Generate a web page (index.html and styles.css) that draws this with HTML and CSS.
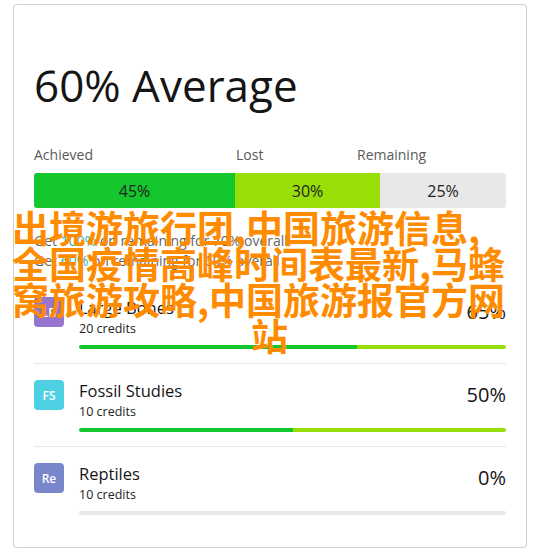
FILE: index.html
```html
<!DOCTYPE html>
<html lang="en">
<head>
<meta charset="utf-8">
<title>Average</title>
<link rel="stylesheet" href="styles.css">
</head>
<body>
<div class="card">
  <h1 class="title">60% Average</h1>
  <div class="legend">
    <span>Achieved</span>
    <span>Lost</span>
    <span>Remaining</span>
  </div>
  <div class="stack">
    <div class="seg seg-achieved">45%</div>
    <div class="seg seg-lost">30%</div>
    <div class="seg seg-remaining">25%</div>
  </div>
  <div class="hints">
    <p>Get <span class="hl">100%</span> on remaining for 70% overall</p>
    <p>Get <span class="hl">60%</span> on remaining for 60% overall</p>
  </div>
  <ul class="courses">
    <li class="course">
      <div class="avatar av-lb">LB</div>
      <div class="course-body">
        <div class="course-head">
          <div class="course-info">
            <div class="course-name">Large Bones</div>
            <div class="credits">20 credits</div>
          </div>
          <div class="course-pct">65%</div>
        </div>
        <div class="progress">
          <div class="p-fill" style="width:65%"></div>
          <div class="p-lost" style="width:35%"></div>
        </div>
      </div>
    </li>
    <li class="course">
      <div class="avatar av-fs">FS</div>
      <div class="course-body">
        <div class="course-head">
          <div class="course-info">
            <div class="course-name">Fossil Studies</div>
            <div class="credits">10 credits</div>
          </div>
          <div class="course-pct">50%</div>
        </div>
        <div class="progress">
          <div class="p-fill" style="width:50%"></div>
          <div class="p-lost" style="width:50%"></div>
        </div>
      </div>
    </li>
    <li class="course">
      <div class="avatar av-re">Re</div>
      <div class="course-body">
        <div class="course-head">
          <div class="course-info">
            <div class="course-name">Reptiles</div>
            <div class="credits">10 credits</div>
          </div>
          <div class="course-pct">0%</div>
        </div>
        <div class="progress"></div>
      </div>
    </li>
  </ul>
</div>
<div class="ad">
  <span class="ad-main">出境游旅行团,中国旅游信息,全国疫情高峰时间表最新,马蜂窝旅游攻略,中国旅游报官方网</span><span class="ad-tail">站</span>
</div>
</body>
</html>
```

FILE: styles.css
```css
* { box-sizing: border-box; }

html, body {
  background: #ffffff;
}

body {
  margin: 4px 11px 6px 13px;
  font-family: "Open Sans", "Noto Sans", sans-serif;
  color: #1a1a1a;
}

.card {
  border: 1px solid #cfcfcf;
  border-radius: 4px;
  padding: 0 20px 32px 20px;
  box-shadow: 0 1px 2px rgba(0, 0, 0, 0.08);
}

.title {
  margin: 53px 0 0 0;
  font-size: 44px;
  line-height: 54px;
  font-weight: 400;
  color: #151515;
}

.legend {
  display: grid;
  grid-template-columns: 202px 121px 1fr;
  margin-top: 33px;
  font-size: 14px;
  line-height: 20px;
  color: #5a5a5a;
}

.stack {
  display: flex;
  height: 35px;
  margin-top: 8px;
  border-radius: 3px;
  overflow: hidden;
}

.seg {
  display: flex;
  align-items: center;
  justify-content: center;
  font-size: 16px;
  color: #222;
}

.seg-achieved { width: 201px; background: #14c72f; }
.seg-lost { width: 145px; background: #98de09; }
.seg-remaining { flex: 1; background: #e8e8e8; }

.hints {
  margin-top: 23px;
  font-size: 14px;
  line-height: 20px;
  color: #666;
}

.hints p { margin: 0; }

.hl { color: #2bb3a3; }

.courses {
  list-style: none;
  margin: 10px 0 0 0;
  padding: 0;
}

.course {
  display: flex;
  gap: 15px;
  padding: 16px 0 14px 0;
  border-bottom: 1px solid #e9e9e9;
}

.course:last-child {
  border-bottom: none;
  padding-bottom: 0;
}

.avatar {
  flex: none;
  width: 30px;
  height: 30px;
  border-radius: 4px;
  display: flex;
  align-items: center;
  justify-content: center;
  color: #fff;
  font-size: 12px;
  font-weight: 600;
}

.av-lb { background: #9575cd; }
.av-fs { background: #4dd0e1; }
.av-re { background: #7986cb; }

.course-body {
  flex: 1;
  min-width: 0;
}

.course-head {
  display: flex;
  justify-content: space-between;
  align-items: flex-start;
}

.course-name {
  font-size: 16.5px;
  line-height: 22px;
  color: #151515;
}

.credits {
  font-size: 12.5px;
  line-height: 20px;
  color: #222;
}

.course-pct {
  margin-top: 3px;
  font-size: 20px;
  line-height: 24px;
  color: #151515;
}

.progress {
  display: flex;
  height: 4px;
  margin-top: 6px;
  border-radius: 2px;
  overflow: hidden;
  background: #e8e8e8;
}

.p-fill { background: #14c72f; }
.p-lost { background: #98de09; }

.ad {
  position: absolute;
  top: 209px;
  left: 12px;
  width: 515px;
  font-family: "Noto Sans CJK SC", "Noto Sans", sans-serif;
  font-weight: 700;
  font-size: 37px;
  line-height: 36px;
  color: #ff8c00;
}

.ad-main {
  display: block;
  width: 500px;
}

.ad-tail {
  display: block;
  text-align: center;
}
```
